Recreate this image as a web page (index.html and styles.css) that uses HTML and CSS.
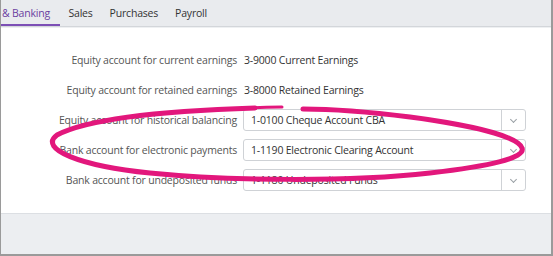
FILE: index.html
```html
<!DOCTYPE html>
<html lang="en">
<head>
  <meta charset="UTF-8">
  <meta name="viewport" content="width=device-width, initial-scale=1.0">
  <title>Banking settings</title>
  <link rel="stylesheet" href="styles.css">
</head>
<body>
  <div class="frame">
    <div class="tabs">
      <div class="tab active">&amp; Banking</div>
      <div class="tab">Sales</div>
      <div class="tab">Purchases</div>
      <div class="tab">Payroll</div>
    </div>

    <div class="content">
      <div class="form">
        <div class="label">Equity account for current earnings</div>
        <div class="value">3-9000 Current Earnings</div>

        <div class="label">Equity account for retained earnings</div>
        <div class="value">3-8000 Retained Earnings</div>

        <div class="label">Equity account for historical balancing</div>
        <div class="select">
          <span class="select-text">1-0100 Cheque Account CBA</span>
          <span class="select-btn"><span class="chevron"></span></span>
        </div>

        <div class="label">Bank account for electronic payments</div>
        <div class="select">
          <span class="select-text">1-1190 Electronic Clearing Account</span>
          <span class="select-btn"><span class="chevron"></span></span>
        </div>

        <div class="label">Bank account for undeposited funds</div>
        <div class="select">
          <span class="select-text">1-1180 Undeposited Funds</span>
          <span class="select-btn"><span class="chevron"></span></span>
        </div>
      </div>

      <!-- highlighter loop drawn over the form -->
      <svg class="scribble" width="553" height="256" viewBox="0 0 553 256">
        <path d="M255 108 C 190 110, 95 115, 57 135 C 38 149, 80 166, 150 173 C 230 181, 350 182, 430 173 C 490 166, 526 158, 522 148 C 518 136, 470 125, 410 117 C 370 112, 330 109, 303 109"
              fill="none" stroke="#e2177c" stroke-width="5" stroke-linecap="round"/>
        <path d="M282 107 C 272 107, 262 107, 250 108" fill="none" stroke="#e2177c" stroke-width="3" stroke-linecap="round"/>
      </svg>
    </div>

    <div class="footer"></div>
  </div>
</body>
</html>
```

FILE: styles.css
```css
body {
  margin: 0;
  font-family: "Open Sans", "Noto Sans", sans-serif;
  font-size: 10.5px;
  letter-spacing: -0.2px;
  background: #ffffff;
}

.frame {
  width: 553px;
  height: 256px;
  box-sizing: border-box;
  border-left: 1px solid #9a9a9a;
  border-right: 2px solid #9a9a9a;
  border-bottom: 2px solid #9a9a9a;
  display: flex;
  flex-direction: column;
  position: relative;
  overflow: hidden;
}

.tabs {
  display: flex;
  height: 26px;
  background: #e9ebee;
  border-bottom: 1px solid #d3d6da;
  box-shadow: 0 1px 0 #eef0f2;
}

.tab {
  padding: 0 8.5px;
  line-height: 26px;
  color: #333333;
  font-size: 10.5px;
}

.tab.active {
  color: #6b3fa0;
  padding: 0 10px 0 1px;
  box-shadow: inset 0 -2px 0 #7c4fb5;
}

.content {
  flex: 1;
  padding-top: 22px;
}

.form {
  display: grid;
  grid-template-columns: 236px 283px;
  column-gap: 6px;
  row-gap: 8px;
  grid-auto-rows: 22px;
  align-items: center;
}

.label {
  text-align: right;
  color: #555555;
  white-space: nowrap;
}

.value {
  color: #333333;
  padding-left: 1px;
}

.select {
  display: flex;
  height: 22px;
  box-sizing: border-box;
  border: 1px solid #cfd2d6;
  border-radius: 3px;
  background: #ffffff;
}

.select-text {
  flex: 1;
  padding-left: 7px;
  line-height: 20px;
  color: #333333;
}

.select-btn {
  width: 23px;
  border-left: 1px solid #cfd2d6;
  display: flex;
  align-items: center;
  justify-content: center;
}

.chevron {
  width: 4px;
  height: 4px;
  border-right: 1px solid #9aa0a6;
  border-bottom: 1px solid #9aa0a6;
  transform: rotate(45deg);
  margin-top: -2px;
}

.scribble {
  position: absolute;
  left: -1px;
  top: 0;
  pointer-events: none;
}

.footer {
  height: 40px;
  background: #eceef1;
  border-top: 1px solid #dcdfe3;
}
```
